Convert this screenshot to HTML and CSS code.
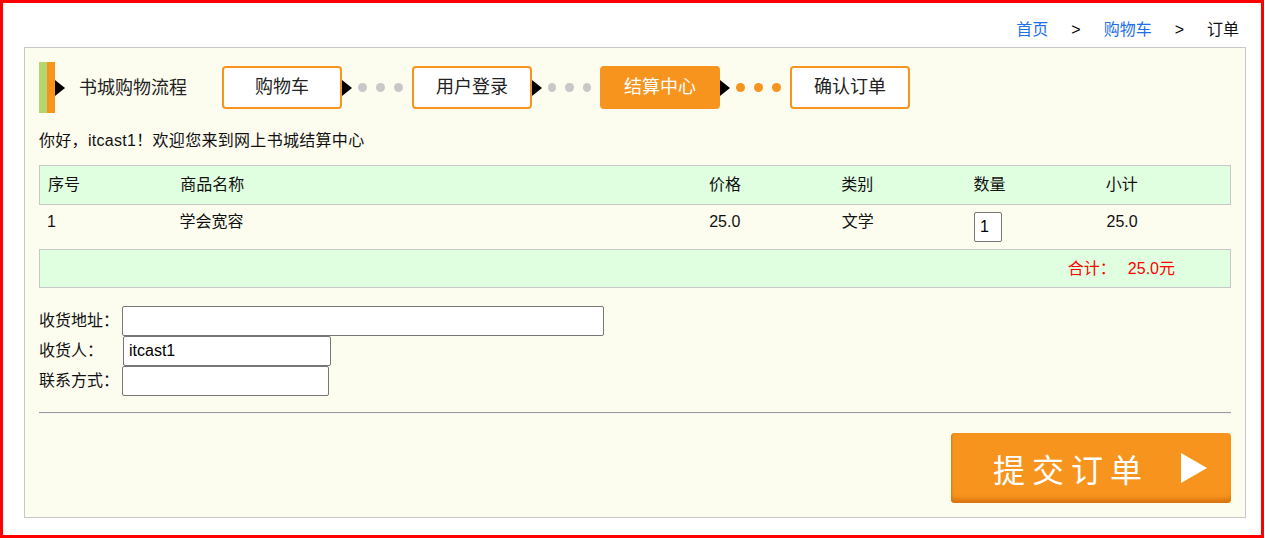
FILE: index.html
```html
<!DOCTYPE html>
<html lang="zh-CN">
<head>
    <meta charset="UTF-8">
    <title>订单 - 网上书城</title>
    <link rel="stylesheet" href="styles.css">
</head>
<body>
    <div class="page">
        <div class="crumbs">
            <a href="#">首页</a>
            <span class="sep">&gt;</span>
            <a href="#">购物车</a>
            <span class="sep">&gt;</span>
            <span>订单</span>
        </div>

        <div class="main">
            <div class="flow">
                <div class="flow-mark"></div>
                <div class="arrow"></div>
                <div class="flow-title">书城购物流程</div>

                <div class="step">购物车</div>
                <div class="link">
                    <div class="arrow"></div>
                    <span class="dot"></span><span class="dot"></span><span class="dot"></span>
                </div>
                <div class="step">用户登录</div>
                <div class="link short">
                    <div class="arrow"></div>
                    <span class="dot"></span><span class="dot"></span><span class="dot"></span>
                </div>
                <div class="step active">结算中心</div>
                <div class="link done">
                    <div class="arrow"></div>
                    <span class="dot"></span><span class="dot"></span><span class="dot"></span>
                </div>
                <div class="step">确认订单</div>
            </div>

            <p class="hello">你好，itcast1！欢迎您来到网上书城结算中心</p>

            <div class="cart">
                <div class="row head">
                    <div>序号</div>
                    <div>商品名称</div>
                    <div>价格</div>
                    <div>类别</div>
                    <div>数量</div>
                    <div>小计</div>
                </div>
                <div class="row item">
                    <div>1</div>
                    <div>学会宽容</div>
                    <div>25.0</div>
                    <div>文学</div>
                    <div><input class="qty" type="text" value="1"></div>
                    <div>25.0</div>
                </div>
                <div class="total">
                    合计：<span class="sum">25.0元</span>
                </div>
            </div>

            <form class="address">
                <label>收货地址：</label>
                <input class="wide" type="text">
                <label>收货人：</label>
                <input class="name" type="text" value="itcast1">
                <label>联系方式：</label>
                <input class="phone" type="text">
            </form>

            <hr>

            <div class="actions">
                <button class="submit" type="button">
                    <span>提交订单</span>
                    <i class="play"></i>
                </button>
            </div>
        </div>
    </div>
</body>
</html>
```

FILE: styles.css
```css
:root {
    --orange: #f7941e;
    --green: #e0ffe0;
    --line: #c8c8c8;
}

* {
    box-sizing: border-box;
}

body {
    margin: 0;
    font-family: "Liberation Sans", "Noto Sans CJK SC", sans-serif;
    font-size: 16px;
    line-height: 24px;
    color: #111;
    background: #fff;
}

.page {
    width: 1264px;
    height: 538px;
    border: 3px solid #f00;
    padding: 0 0 0 21px;
}

/* breadcrumb */
.crumbs {
    height: 44px;
    padding: 15px 22px 0 0;
    display: flex;
    justify-content: flex-end;
    gap: 23px;
}

.crumbs a {
    color: #1f6fe8;
    text-decoration: none;
}

.crumbs .sep {
    color: #000;
}

.main {
    width: 1222px;
    height: 471px;
    border: 1px solid var(--line);
    background-color: #fcfcef;
    padding: 14px 14px 0 14px;
}

/* shopping flow */
.flow {
    display: flex;
    align-items: center;
    height: 51px;
}

.flow-mark {
    width: 16px;
    height: 51px;
    background: linear-gradient(90deg, #b5d66a 50%, var(--orange) 50%);
}

.arrow {
    width: 0;
    height: 0;
    border-left: 10px solid #000;
    border-top: 8px solid transparent;
    border-bottom: 8px solid transparent;
}

.flow-title {
    margin: 0 35px 0 14px;
    font-size: 18px;
    color: #222;
}

.step {
    width: 120px;
    height: 43px;
    border: 2px solid var(--orange);
    border-radius: 4px;
    background: #fff;
    font-size: 18px;
    line-height: 39px;
    text-align: center;
    color: #222;
}

.step.active {
    background: var(--orange);
    color: #fff;
}

.link {
    width: 70px;
    display: flex;
    align-items: center;
}

.link.short {
    width: 68px;
}

.link .arrow {
    margin-right: 6px;
}

.dot {
    width: 9px;
    height: 9px;
    border-radius: 50%;
    background: #c8c8c8;
    margin-right: 9px;
}

.link.done .dot {
    background: var(--orange);
}

.hello {
    margin: 16px 0 12px 0;
    letter-spacing: 0.3px;
}

/* cart table */
.row {
    display: grid;
    grid-template-columns: 1fr 4fr 1fr 1fr 1fr 1fr;
}

.row > div {
    padding-left: 8px;
}

.row.head {
    height: 40px;
    line-height: 38px;
    background: var(--green);
    border: 1px solid var(--line);
}

.row.item {
    height: 44px;
    padding-top: 5px;
    align-items: start;
}

.qty {
    width: 28px;
    height: 30px;
    margin-top: 2px;
    padding: 0 0 0 5px;
    border: 1px solid #777;
    border-radius: 2px;
    font: 16px "Liberation Sans", sans-serif;
    background: #fff;
}

.total {
    height: 39px;
    line-height: 37px;
    background: var(--green);
    border: 1px solid var(--line);
    text-align: right;
    padding-right: 55px;
    color: #f00;
}

.total .sum {
    margin-left: 12px;
}

/* address form */
.address {
    margin-top: 18px;
    display: grid;
    grid-template-columns: 83px auto;
    justify-items: start;
    align-items: center;
}

.address label {
    line-height: 30px;
}

.address input {
    height: 30px;
    border: 1px solid #777;
    border-radius: 2px;
    padding: 0 5px;
    font: 16px "Liberation Sans", sans-serif;
    background: #fff;
}

.address .wide {
    width: 482px;
}

.address .name {
    width: 208px;
    margin-left: 1px;
}

.address .phone {
    width: 207px;
}

hr {
    height: 0;
    margin: 16px 0 0 0;
    border: 0;
    border-top: 1px solid #9a9a9a;
    border-bottom: 1px solid #f4f4f4;
}

.actions {
    display: flex;
    justify-content: flex-end;
    margin-top: 19px;
}

.submit {
    width: 280px;
    height: 70px;
    border: none;
    border-radius: 4px;
    background: var(--orange);
    box-shadow: inset 0 -6px 4px -2px #d8740f, inset 2px 0 2px -1px #e07f16;
    display: flex;
    align-items: center;
    padding: 0 0 0 42px;
    color: #fff;
    font-family: "Noto Sans CJK SC", sans-serif;
    font-size: 32px;
    letter-spacing: 7px;
    cursor: pointer;
}

.play {
    margin-left: 32px;
    width: 0;
    height: 0;
    border-left: 26px solid #fff;
    border-top: 15px solid transparent;
    border-bottom: 15px solid transparent;
}
```
